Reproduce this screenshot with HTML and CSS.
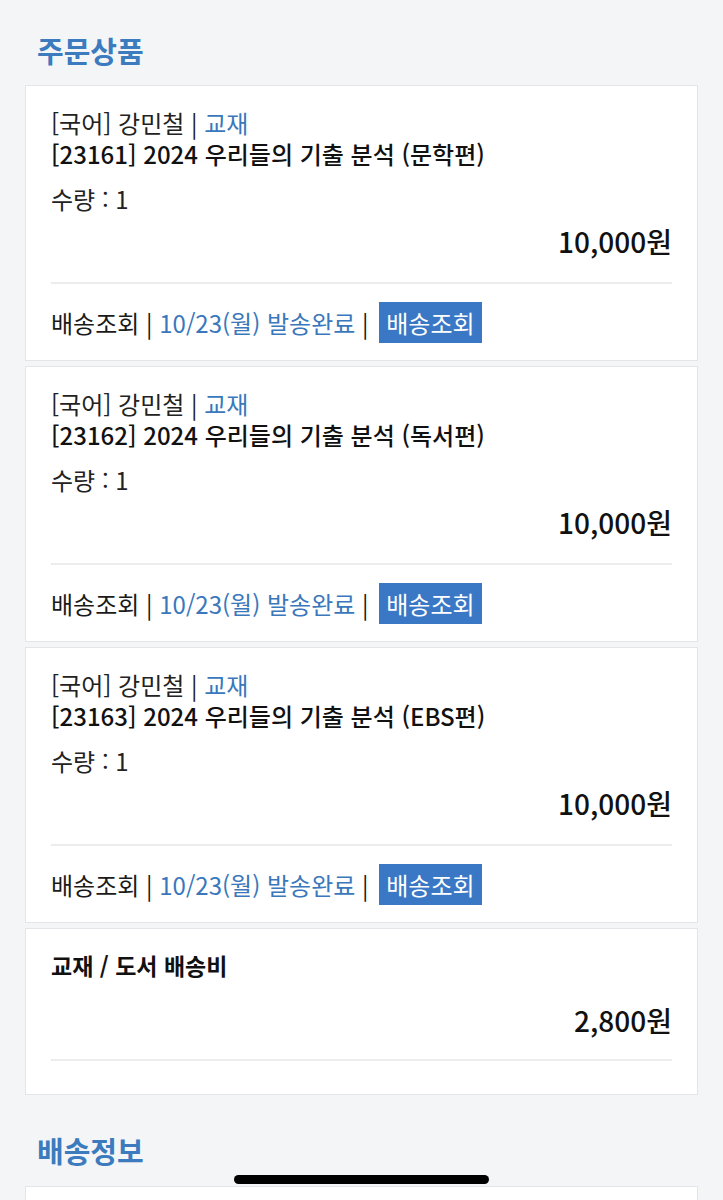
FILE: index.html
```html
<!DOCTYPE html>
<html lang="ko">
<head>
  <meta charset="UTF-8">
  <meta name="viewport" content="width=device-width, initial-scale=1.0">
  <title>주문상세</title>
  <link rel="stylesheet" href="styles.css">
</head>
<body>
  <div class="page">
    <h2 class="section-title">주문상품</h2>

    <div class="card">
      <div class="meta">[국어] 강민철 | <span class="blue">교재</span></div>
      <div class="name">[23161] 2024 우리들의 기출 분석 (문학편)</div>
      <div class="qty">수량 : 1</div>
      <div class="price">10,000원</div>
      <div class="ship-row">배송조회 | <span class="blue">10/23(월) 발송완료</span> | <button class="ship-btn">배송조회</button></div>
    </div>

    <div class="card">
      <div class="meta">[국어] 강민철 | <span class="blue">교재</span></div>
      <div class="name">[23162] 2024 우리들의 기출 분석 (독서편)</div>
      <div class="qty">수량 : 1</div>
      <div class="price">10,000원</div>
      <div class="ship-row">배송조회 | <span class="blue">10/23(월) 발송완료</span> | <button class="ship-btn">배송조회</button></div>
    </div>

    <div class="card">
      <div class="meta">[국어] 강민철 | <span class="blue">교재</span></div>
      <div class="name">[23163] 2024 우리들의 기출 분석 (EBS편)</div>
      <div class="qty">수량 : 1</div>
      <div class="price">10,000원</div>
      <div class="ship-row">배송조회 | <span class="blue">10/23(월) 발송완료</span> | <button class="ship-btn">배송조회</button></div>
    </div>

    <div class="card fee-card">
      <div class="fee-title">교재 / 도서 배송비</div>
      <div class="price fee-price">2,800원</div>
    </div>

    <h2 class="section-title second">배송정보</h2>
    <div class="card empty-card"></div>
  </div>
  <div class="home-bar"></div>
</body>
</html>
```

FILE: styles.css
```css
body {
  margin: 0;
  background-color: #f4f5f7;
  font-family: "Noto Sans CJK KR", "Noto Sans", sans-serif;
  color: #111111;
}
.page {
  padding: 0 25px;
}
.section-title {
  margin: 0;
  padding: 32px 0 17px 12px;
  font-size: 29px;
  line-height: 36px;
  font-weight: 700;
  color: #3b7bbe;
}
.section-title.second {
  padding-top: 32px;
  padding-bottom: 18px;
}
.card {
  background: #ffffff;
  border: 1px solid #e4e5e8;
  padding: 21px 25px 17px;
  margin-bottom: 5px;
}
.blue {
  color: #3a78bb;
}
.meta {
  font-size: 24px;
  line-height: 31px;
  color: #222222;
}
.name {
  font-size: 24px;
  line-height: 31px;
  font-weight: 500;
  color: #111111;
}
.qty {
  margin-top: 14px;
  font-size: 24px;
  line-height: 31px;
  color: #222222;
}
.price {
  margin-top: 12px;
  text-align: right;
  font-size: 28px;
  line-height: 31px;
  font-weight: 500;
  color: #111111;
  padding-bottom: 25px;
  border-bottom: 2px solid #ececec;
}
.ship-row {
  padding-top: 18px;
  font-size: 24px;
  line-height: 41px;
  height: 41px;
  color: #1a1a1a;
  white-space: nowrap;
}
.ship-btn {
  display: inline-block;
  vertical-align: top;
  margin-left: 4px;
  height: 41px;
  padding: 0 7px;
  border: none;
  background-color: #3a78c6;
  color: #ffffff;
  font-family: inherit;
  font-size: 24px;
  line-height: 41px;
}
.fee-card {
  padding-top: 21px;
  padding-bottom: 33px;
}
.fee-title {
  font-size: 23px;
  line-height: 31px;
  font-weight: 700;
}
.fee-price {
  margin-top: 24px;
  padding-bottom: 23px;
}
.empty-card {
  height: 60px;
}
.home-bar {
  position: fixed;
  left: 234px;
  bottom: 16px;
  width: 255px;
  height: 9px;
  border-radius: 5px;
  background: #000000;
}
```
